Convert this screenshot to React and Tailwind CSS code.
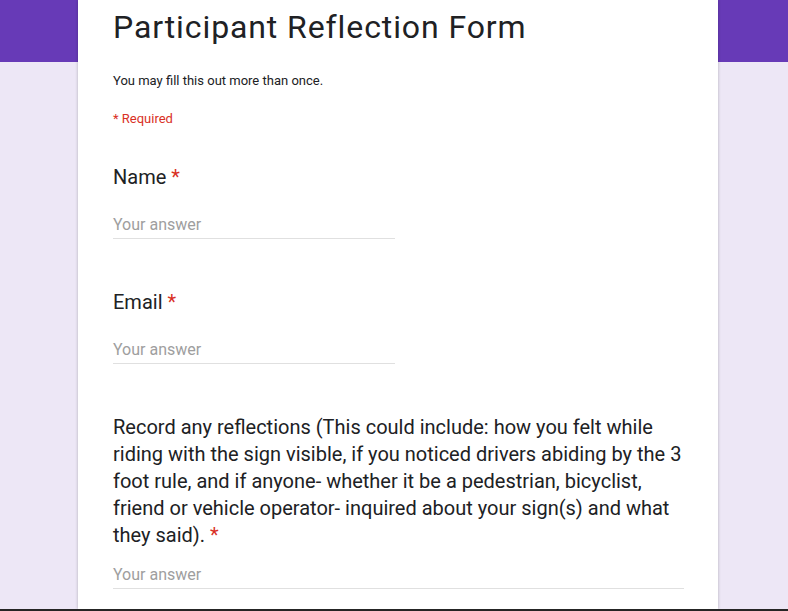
import React from "react";

function Question({ label, wide, className }) {
  return (
    <div className={className}>
      <div className="text-[20px] leading-[27px] text-[#202124]">
        {label}
        <span className="text-[#d93025]"> *</span>
      </div>
      <div
        className={
          "border-b border-[#e0e0e0] pb-[1px] text-[16px] leading-[24px] text-[#9e9e9e] " +
          (wide ? "mt-[14px] w-full" : "mt-[22px] w-[282px]")
        }
      >
        Your answer
      </div>
    </div>
  );
}

export default function App() {
  return (
    <div
      className="h-[611px] w-full flex flex-col overflow-hidden bg-[linear-gradient(#673ab7_0_62px,#ede7f6_62px)]"
      style={{ fontFamily: "Roboto, 'Liberation Sans', sans-serif" }}
    >
      <div className="flex-1 overflow-hidden">
        <div className="ml-[78px] w-[640px] h-full bg-white shadow-[0_0_3px_rgba(0,0,0,0.25)] pl-[35px] pr-[34px]">
          <h1 className="pt-[9px] text-[32px] leading-[36px] tracking-[0.9px] text-[#202124]">
            Participant Reflection Form
          </h1>
          <p className="mt-[26px] text-[13px] leading-[20px] text-[#202124]">
            You may fill this out more than once.
          </p>
          <p className="mt-[18px] text-[13px] leading-[20px] text-[#d93025]">* Required</p>

          <Question className="mt-[35px]" label="Name" />
          <Question className="mt-[50px]" label="Email" />
          <Question
            className="mt-[50px]"
            wide
            label="Record any reflections (This could include: how you felt while riding with the sign visible, if you noticed drivers abiding by the 3 foot rule, and if anyone- whether it be a pedestrian, bicyclist, friend or vehicle operator- inquired about your sign(s) and what they said)."
          />
        </div>
      </div>
      <div className="h-[2px] bg-[#252525]" />
    </div>
  );
}
